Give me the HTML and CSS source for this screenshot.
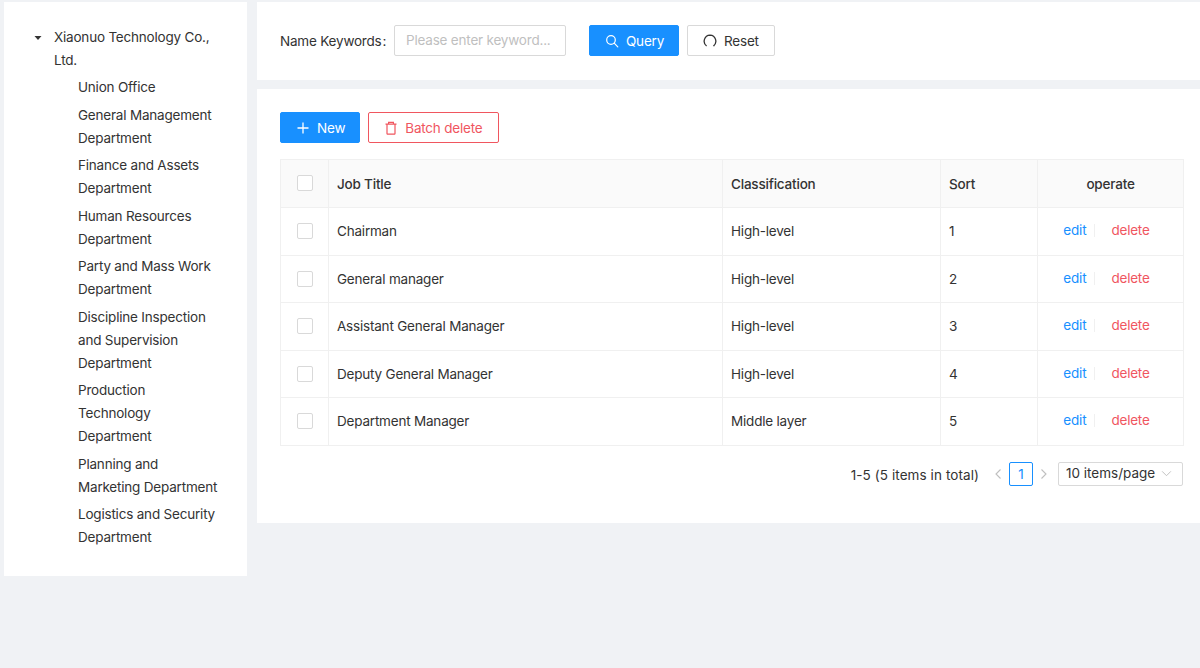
FILE: index.html
```html
<!DOCTYPE html>
<html lang="en">
<head>
<meta charset="utf-8">
<title>Positions</title>
<link rel="stylesheet" href="styles.css">
</head>
<body>
<div class="page">
  <aside class="side">
    <div class="tree-root">
      <svg class="caret" viewBox="0 0 8 6" width="8" height="6"><path d="M0.5 1h7L4 5z" fill="#333"/></svg>
      <span class="root-label">Xiaonuo Technology Co., Ltd.</span>
    </div>
    <ul class="tree">
      <li>Union Office</li>
      <li>General Management Department</li>
      <li>Finance and Assets Department</li>
      <li>Human Resources Department</li>
      <li>Party and Mass Work Department</li>
      <li>Discipline Inspection and Supervision Department</li>
      <li>Production Technology Department</li>
      <li>Planning and Marketing Department</li>
      <li>Logistics and Security Department</li>
    </ul>
  </aside>
  <main class="main">
    <section class="card search">
      <label class="field-label">Name Keywords<span class="colon">:</span></label>
      <div class="input">Please enter keyword...</div>
      <button class="btn primary query">
        <svg viewBox="0 0 14 14" width="14" height="14" fill="none" stroke="#fff" stroke-width="1.2"><circle cx="6" cy="6" r="4.3"/><path d="M9.2 9.2l3.6 3.6" stroke-linecap="round"/></svg>
        Query
      </button>
      <button class="btn reset">
        <svg viewBox="0 0 14 14" width="14" height="14" fill="none" stroke="#333" stroke-width="1.3"><path d="M3.6 12A6 6 0 0 1 7 1.2 6 6 0 0 1 10.4 12M10.4 12l1.2-.5"/></svg>
        Reset
      </button>
    </section>
    <section class="card content">
      <div class="toolbar">
        <button class="btn primary">
          <svg viewBox="0 0 14 14" width="14" height="14" fill="none" stroke="#fff" stroke-width="1.3"><path d="M7 1.5v11M1.5 7h11"/></svg>
          New
        </button>
        <button class="btn danger">
          <svg viewBox="0 0 14 14" width="14" height="14" fill="none" stroke="#f0565f" stroke-width="1.2"><path d="M1.5 3.2h11M4.6 3.2V1.4h4.8v1.8M3 3.2v9.3a.7.7 0 0 0 .7.7h6.6a.7.7 0 0 0 .7-.7V3.2"/></svg>
          Batch delete
        </button>
      </div>
      <table class="table">
        <colgroup><col class="c-check"><col class="c-title"><col class="c-class"><col class="c-sort"><col class="c-op"></colgroup>
        <thead>
          <tr><th class="check"><span class="box"></span></th><th>Job Title</th><th>Classification</th><th>Sort</th><th class="center">operate</th></tr>
        </thead>
        <tbody>
          <tr><td class="check"><span class="box"></span></td><td>Chairman</td><td>High-level</td><td>1</td><td class="center"><div class="ops"><a class="edit">edit</a><i class="divider"></i><a class="del">delete</a></div></td></tr>
          <tr><td class="check"><span class="box"></span></td><td>General manager</td><td>High-level</td><td>2</td><td class="center"><div class="ops"><a class="edit">edit</a><i class="divider"></i><a class="del">delete</a></div></td></tr>
          <tr><td class="check"><span class="box"></span></td><td>Assistant General Manager</td><td>High-level</td><td>3</td><td class="center"><div class="ops"><a class="edit">edit</a><i class="divider"></i><a class="del">delete</a></div></td></tr>
          <tr><td class="check"><span class="box"></span></td><td>Deputy General Manager</td><td>High-level</td><td>4</td><td class="center"><div class="ops"><a class="edit">edit</a><i class="divider"></i><a class="del">delete</a></div></td></tr>
          <tr><td class="check"><span class="box"></span></td><td>Department Manager</td><td>Middle layer</td><td>5</td><td class="center"><div class="ops"><a class="edit">edit</a><i class="divider"></i><a class="del">delete</a></div></td></tr>
        </tbody>
      </table>
      <div class="pager">
        <span class="total">1-5 (5 items in total)</span>
        <svg class="arrow prev" viewBox="0 0 8 12" width="8" height="12" fill="none" stroke="#bfbfbf" stroke-width="1.1"><path d="M6.5 1.5L2 6l4.5 4.5"/></svg>
        <span class="page-num">1</span>
        <svg class="arrow next" viewBox="0 0 8 12" width="8" height="12" fill="none" stroke="#bfbfbf" stroke-width="1.1"><path d="M1.5 1.5L6 6l-4.5 4.5"/></svg>
        <div class="size"><span class="size-text">10 items/page</span>
          <svg viewBox="0 0 12 8" width="11" height="7" fill="none" stroke="#bfbfbf" stroke-width="1.1"><path d="M1 1.5l5 5 5-5"/></svg>
        </div>
      </div>
    </section>
  </main>
</div>
</body>
</html>
```
FILE: styles.css
```css
* { box-sizing: border-box; }
html, body { margin: 0; padding: 0; }
body {
  width: 1200px;
  height: 668px;
  overflow: hidden;
  background: #f0f2f5;
  font-family: Inter, "Liberation Sans", sans-serif;
  font-size: 13.5px;
  letter-spacing: -0.2px;
  color: #333;
}
.page {
  display: flex;
  align-items: flex-start;
  gap: 10px;
  padding: 2px 0 0 4px;
}
.side {
  width: 243px;
  height: 574px;
  flex: none;
  background: #fff;
  padding: 24px 27px 0 30px;
}
.tree-root {
  display: flex;
  line-height: 23px;
}
.caret { flex: none; margin: 9px 12px 0 0; }
.tree {
  list-style: none;
  margin: 4px 0 0;
  padding: 0 0 0 44px;
  line-height: 23px;
}
.tree li { margin-bottom: 4.5px; }
.main {
  flex: 1;
  display: flex;
  flex-direction: column;
  gap: 9px;
  min-width: 0;
}
.card { background: #fff; }
.search {
  height: 78px;
  padding: 23px 0 0 23px;
  display: flex;
  align-items: flex-start;
}
.field-label { line-height: 33px; width: 114px; flex: none; white-space: nowrap; }
.colon { margin-left: 1px; }
.input {
  width: 172px;
  height: 31px;
  border: 1px solid #d9d9d9;
  border-radius: 2px;
  color: #bfbfbf;
  line-height: 29px;
  padding-left: 11px;
}
.btn {
  height: 31px;
  display: inline-flex;
  align-items: center;
  gap: 7px;
  padding: 0 14px 0 15px;
  border: 1px solid #d9d9d9;
  border-radius: 2px;
  background: #fff;
  color: #333;
  font: inherit;
  letter-spacing: inherit;
}
.primary { background: #1890ff; border-color: #1890ff; color: #fff; }
.danger { border-color: #f0565f; color: #f0565f; padding-right: 16px; }
.query { margin-left: 23px; }
.reset { margin-left: 8px; padding-right: 15px; }
.content { height: 434px; padding: 23px 17px 0 23px; }
.toolbar { display: flex; gap: 8px; }
.table {
  margin-top: 16px;
  width: 903px;
  table-layout: fixed;
  border-collapse: separate;
  border-spacing: 0;
  border-top: 1px solid #f0f0f0;
  border-left: 1px solid #f0f0f0;
}
.c-check { width: 48px; }
.c-title { width: 394px; }
.c-class { width: 218px; }
.c-sort { width: 97px; }
.c-op { width: 146px; }
th, td {
  border-right: 1px solid #f0f0f0;
  border-bottom: 1px solid #f0f0f0;
  padding: 0 8px;
  text-align: left;
  font-weight: 400;
}
th { height: 48px; background: #fafafa; font-weight: 500; }
td { height: 47.5px; }
.center { text-align: center; }
.check { text-align: center; padding: 0; }
.box {
  display: inline-block;
  width: 16px;
  height: 16px;
  border: 1px solid #d9d9d9;
  border-radius: 2px;
  background: #fff;
  vertical-align: middle;
  margin-top: -3px;
}
.ops { padding: 0 8px 2px 0; }
.edit { color: #1890ff; }
.del { color: #f0565f; }
.divider {
  display: inline-block;
  width: 1px;
  height: 13px;
  background: #f0f0f0;
  margin: 0 16px 0 8px;
  vertical-align: -2px;
}
.pager {
  display: flex;
  align-items: center;
  justify-content: flex-end;
  margin-top: 16px;
  height: 24px;
}
.total { margin-right: 15px; padding-top: 3px; letter-spacing: 0.08px; }
.page-num {
  width: 24px;
  height: 24px;
  margin: 0 7px;
  border: 1px solid #1890ff;
  border-radius: 2px;
  color: #1890ff;
  text-align: center;
  line-height: 22px;
}
.size {
  width: 125px;
  height: 24px;
  margin-left: 10px;
  padding: 0 10px 0 7px;
  border: 1px solid #d9d9d9;
  border-radius: 2px;
  display: flex;
  align-items: center;
  justify-content: space-between;
  letter-spacing: 0;
}
.size-text { position: relative; top: -1px; }
```
